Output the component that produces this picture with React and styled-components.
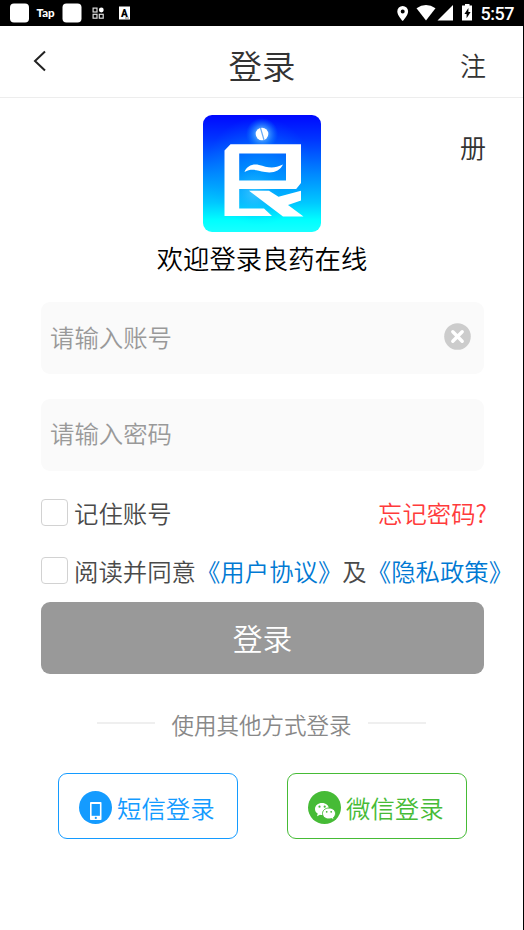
import { useState } from "react";
import styled, { createGlobalStyle } from "styled-components";

const GlobalStyle = createGlobalStyle`
  * {
    box-sizing: border-box;
  }

  body {
    margin: 0;
    background: #fff;
    font-family: "Noto Sans CJK SC", sans-serif;
    font-weight: 350;
  }

  button,
  input {
    font-family: inherit;
    font-weight: inherit;
  }
`;

const Screen = styled.div`
  height: 930px;
  display: flex;
  flex-direction: column;
  overflow: hidden;
`;

const StatusBar = styled.div`
  height: 26px;
  flex: none;
  display: flex;
  justify-content: space-between;
  background: #000;
  color: #fff;
`;

const Page = styled.div`
  flex: 1;
  border-right: 1px solid #000;
`;

const Header = styled.header`
  height: 72px;
  display: flex;
  justify-content: space-between;
  border-bottom: 1px solid #ededed;
  padding: 0 37px 0 33px;
`;

const BackButton = styled.button`
  width: 26px;
  height: 71px;
  padding: 2px 0 0;
  border: 0;
  background: none;
  text-align: left;
`;

const Title = styled.h1`
  margin: 0 0 0 5px;
  font-size: 33.5px;
  font-weight: inherit;
  line-height: 78px;
  color: #333;
`;

const Register = styled.a`
  width: 26px;
  height: 71px;
  font-size: 26px;
  line-height: 82px;
  margin-top: -2px;
  word-break: break-all;
  color: #333;
`;

const Brand = styled.div`
  display: flex;
  flex-direction: column;
  align-items: center;
  padding: 17px 0 0 1px;

  svg {
    display: block;
  }
`;

const Welcome = styled.p`
  margin: 5px 0 0;
  font-size: 26.3px;
  line-height: 40px;
  color: #000;
`;

const Form = styled.form`
  margin: 24px 39px 0 41px;
`;

const Field = styled.label`
  height: 72px;
  margin-bottom: 24.6px;
  padding: 0 13px 4px 9px;
  display: flex;
  align-items: center;
  border-radius: 9px;
  background: #fafafa;
`;

const Input = styled.input`
  flex: 1;
  min-width: 0;
  height: 50px;
  padding: 0;
  border: 0;
  outline: 0;
  background: transparent;
  font-size: 24.4px;
  color: #333;

  &::placeholder {
    color: #999;
    opacity: 1;
  }
`;

const Row = styled.div`
  height: 36px;
  margin-bottom: ${(props) => props.$gap}px;
  display: flex;
  align-items: center;
  white-space: nowrap;
  font-size: 24.4px;
  line-height: 36px;
  color: #4a4a4a;
`;

const Checkbox = styled.input`
  appearance: none;
  flex: none;
  width: 27px;
  height: 27px;
  margin: 0 6px 2px 0;
  border: 1.5px solid #d2d2d2;
  border-radius: 4px;
  background: ${(props) => (props.checked ? "#0e7fd8" : "#fff")};
`;

const Link = styled.a`
  color: #0079d3;
`;

const Forgot = styled.a`
  margin: 0 -3px 0 auto;
  color: #ff3b3b;
`;

const Submit = styled.button`
  width: 100%;
  height: 72px;
  display: block;
  padding: 0 0 2px;
  border: 0;
  border-radius: 9px;
  background: #999;
  font-size: 29.8px;
  color: #fff;
`;

const Divider = styled.div`
  margin-top: 32px;
  height: 36px;
  display: flex;
  align-items: center;
  justify-content: center;
  gap: 16px;
  font-size: 22.5px;
  color: #888;

  &::before,
  &::after {
    content: "";
    width: 58px;
    height: 2px;
    margin-bottom: 2px;
    background: #efefef;
  }
`;

const Others = styled.div`
  margin-top: 30.6px;
  display: flex;
  justify-content: center;
  gap: 49px;
  padding-left: 2px;
`;

const OtherButton = styled.button`
  width: 180px;
  height: 66px;
  display: flex;
  align-items: center;
  gap: 5px;
  padding: 3px 0 0 20px;
  border: 1.4px solid ${(props) => props.$color};
  border-radius: 9px;
  background: #fff;
  font-size: 24.4px;
  white-space: nowrap;
  color: ${(props) => props.$color};

  svg {
    flex: none;
  }
`;

const TapText = styled.text`
  font: 900 11.5px Lato, sans-serif;
  fill: #fff;
`;

const ClockText = styled.text`
  font: 500 18px Roboto, sans-serif;
  fill: #fff;
`;

const BadgeText = styled.text`
  font: 900 10px Roboto, sans-serif;
  fill: #000;
`;

const LeftIcons = () => (
  <svg width="140" height="26" fill="#fff">
    <rect x="10" y="3.5" width="19" height="19" rx="4" />
    <TapText x="36.5" y="16.5">
      Tap
    </TapText>
    <rect x="62.5" y="3.5" width="19" height="19" rx="4" />
    <g fill="none" stroke="#ddd" strokeWidth="1.2">
      <rect x="93.1" y="8.1" width="3.9" height="3.9" />
      <rect x="93.1" y="14.3" width="3.9" height="3.9" />
      <rect x="99.3" y="14.3" width="3.9" height="3.9" />
    </g>
    <circle cx="101.3" cy="10" r="2.4" />
    <rect x="119" y="6.5" width="11" height="13" />
    <BadgeText x="121" y="16.5">
      A
    </BadgeText>
    <path d="M125 18h4" stroke="#888" />
  </svg>
);

const RightIcons = () => (
  <svg width="134" height="26" fill="#fff">
    <path
      fillRule="evenodd"
      d="M12.7 6a5.4 5.4 0 0 0-5.4 5.4c0 4 5.4 9.6 5.4 9.6s5.4-5.6 5.4-9.6A5.4 5.4 0 0 0 12.7 6zm0 3.4a2 2 0 1 1 0 4 2 2 0 0 1 0-4z"
    />
    <path d="M26.5 8.3Q36 1.8 45.5 8.3L36 20.5z" />
    <path d="M63 5v15.5H47.5z" />
    <path
      fillRule="evenodd"
      d="M75 4h4.5v1.5H82v15H72v-15h3zM78.4 8l-4 6h2.2v4.2l4-6.2h-2.2z"
    />
    <ClockText x="90.5" y="19.6" textLength="34">
      5:57
    </ClockText>
  </svg>
);

const Logo = () => (
  <svg width="118" height="118" viewBox="0 0 118 118">
    <defs>
      <linearGradient id="sky" x1="0" y1="0" x2="0" y2="1">
        <stop offset="0" stopColor="#0008ff" />
        <stop offset="0.22" stopColor="#0038ff" />
        <stop offset="0.5" stopColor="#0087ff" />
        <stop offset="0.75" stopColor="#00c8ff" />
        <stop offset="0.9" stopColor="#00ffff" />
        <stop offset="1" stopColor="#18ffff" />
      </linearGradient>
      <radialGradient id="glow">
        <stop offset="0" stopColor="#a8dcff" />
        <stop offset="0.45" stopColor="#48a5ff" stopOpacity="0.75" />
        <stop offset="1" stopColor="#008aff" stopOpacity="0" />
      </radialGradient>
      <radialGradient id="shine">
        <stop offset="0" stopColor="#48c8ff" stopOpacity="0.8" />
        <stop offset="1" stopColor="#00b4ff" stopOpacity="0" />
      </radialGradient>
      <radialGradient id="center">
        <stop offset="0" stopColor="#00a0ff" stopOpacity="0.6" />
        <stop offset="1" stopColor="#0090ff" stopOpacity="0" />
      </radialGradient>
    </defs>
    <rect width="118" height="117" rx="9" fill="url(#sky)" />
    <circle cx="56" cy="56" r="54" fill="url(#center)" />
    <circle cx="51" cy="78" r="27" fill="url(#shine)" />
    <circle cx="59" cy="19" r="16" fill="url(#glow)" />
    <circle cx="59" cy="19" r="6.3" fill="#fff" />
    <path d="M57.5 13l3.5 12" stroke="#68aaf5" strokeWidth="1.2" />
    <path
      fill="#fff"
      fillRule="evenodd"
      d="M27.5 29.2H98V68L93.2 74H36.2V93.5H61L69 101H21.5V35.5zM36.2 38.5V65.5H83V38.5z"
    />
    <path
      fill="#fff"
      d="M46 75.7H66L75.5 81.8 98 75.7V85.5L85 90 100.5 101.5H80z"
    />
    <path
      fill="#fff"
      d="M41.5 57C43.5 51 50 48.5 56 50c8 2 14 4.5 24-.5C77 56 70 58.5 62 57 53 55.5 49 53 41.5 57z"
    />
  </svg>
);

const ClearIcon = () => (
  <svg width="27" height="27" viewBox="0 0 27 27">
    <circle cx="13.5" cy="13.5" r="13.3" fill="#ccc" />
    <path
      d="M8.8 8.8l9.4 9.4M18.2 8.8l-9.4 9.4"
      stroke="#fff"
      strokeWidth="3.4"
      strokeLinecap="round"
    />
  </svg>
);

const PhoneIcon = () => (
  <svg width="33" height="33" viewBox="0 0 33 33">
    <circle cx="16.5" cy="16.5" r="16.5" fill="#149bff" />
    <rect x="11" y="11" width="11.5" height="18" rx="0.8" fill="#fff" />
    <rect x="12.6" y="13" width="8.3" height="11.8" fill="#149bff" />
    <circle cx="16.8" cy="26.9" r="1.1" fill="#149bff" />
  </svg>
);

const WechatIcon = () => (
  <svg width="33" height="33" viewBox="0 0 33 33">
    <circle cx="16.5" cy="16.5" r="16.5" fill="#46bb36" />
    <path
      fill="#fff"
      d="M14 12c-4 0-7 2.6-7 6 0 2 1 3.5 2.7 4.600L9 25.200l3-1.500c5 1 9-1.700 9-5.700 0-3.400-3-6-7-6z"
    />
    <path
      fill="#fff"
      stroke="#46bb36"
      d="M21 17c-3.700 0-6.500 2.400-6.500 5.500S17.300 28 21 28c.9 0 1.700-.1 2.500-.4l2.700 1.300-.7-2.400c1.300-1 2-2.400 2-4 0-3.100-2.800-5.500-6.500-5.500z"
    />
    <g fill="#46bb36">
      <circle cx="11.5" cy="15.7" r="1.1" />
      <circle cx="16.7" cy="15.7" r="1.1" />
      <circle cx="18.7" cy="20.8" r="0.9" />
      <circle cx="23.2" cy="20.8" r="0.9" />
    </g>
  </svg>
);

const App = () => {
  const [account, setAccount] = useState("");
  const [password, setPassword] = useState("");
  const [remember, setRemember] = useState(false);
  const [agree, setAgree] = useState(false);

  return (
    <Screen>
      <GlobalStyle />
      <StatusBar>
        <LeftIcons />
        <RightIcons />
      </StatusBar>
      <Page>
        <Header>
          <BackButton>
            <svg width="14" height="22" fill="none">
              <path d="M12 1.5L2 11l10 9.5" stroke="#222" strokeWidth="2" />
            </svg>
          </BackButton>
          <Title>登录</Title>
          <Register>注册</Register>
        </Header>
        <Brand>
          <Logo />
          <Welcome>欢迎登录良药在线</Welcome>
        </Brand>
        <Form onSubmit={(e) => e.preventDefault()}>
          <Field>
            <Input
              placeholder="请输入账号"
              value={account}
              onChange={(e) => setAccount(e.target.value)}
            />
            <ClearIcon />
          </Field>
          <Field>
            <Input
              type="password"
              placeholder="请输入密码"
              value={password}
              onChange={(e) => setPassword(e.target.value)}
            />
          </Field>
          <Row $gap={22}>
            <Checkbox
              type="checkbox"
              checked={remember}
              onChange={() => setRemember(!remember)}
            />
            记住账号
            <Forgot>忘记密码?</Forgot>
          </Row>
          <Row $gap={13}>
            <Checkbox
              type="checkbox"
              checked={agree}
              onChange={() => setAgree(!agree)}
            />
            阅读并同意<Link>《用户协议》</Link>及<Link>《隐私政策》</Link>
          </Row>
          <Submit>登录</Submit>
        </Form>
        <Divider>使用其他方式登录</Divider>
        <Others>
          <OtherButton $color="#149bff">
            <PhoneIcon />
            短信登录
          </OtherButton>
          <OtherButton $color="#46bb36">
            <WechatIcon />
            微信登录
          </OtherButton>
        </Others>
      </Page>
    </Screen>
  );
};

export default App;
